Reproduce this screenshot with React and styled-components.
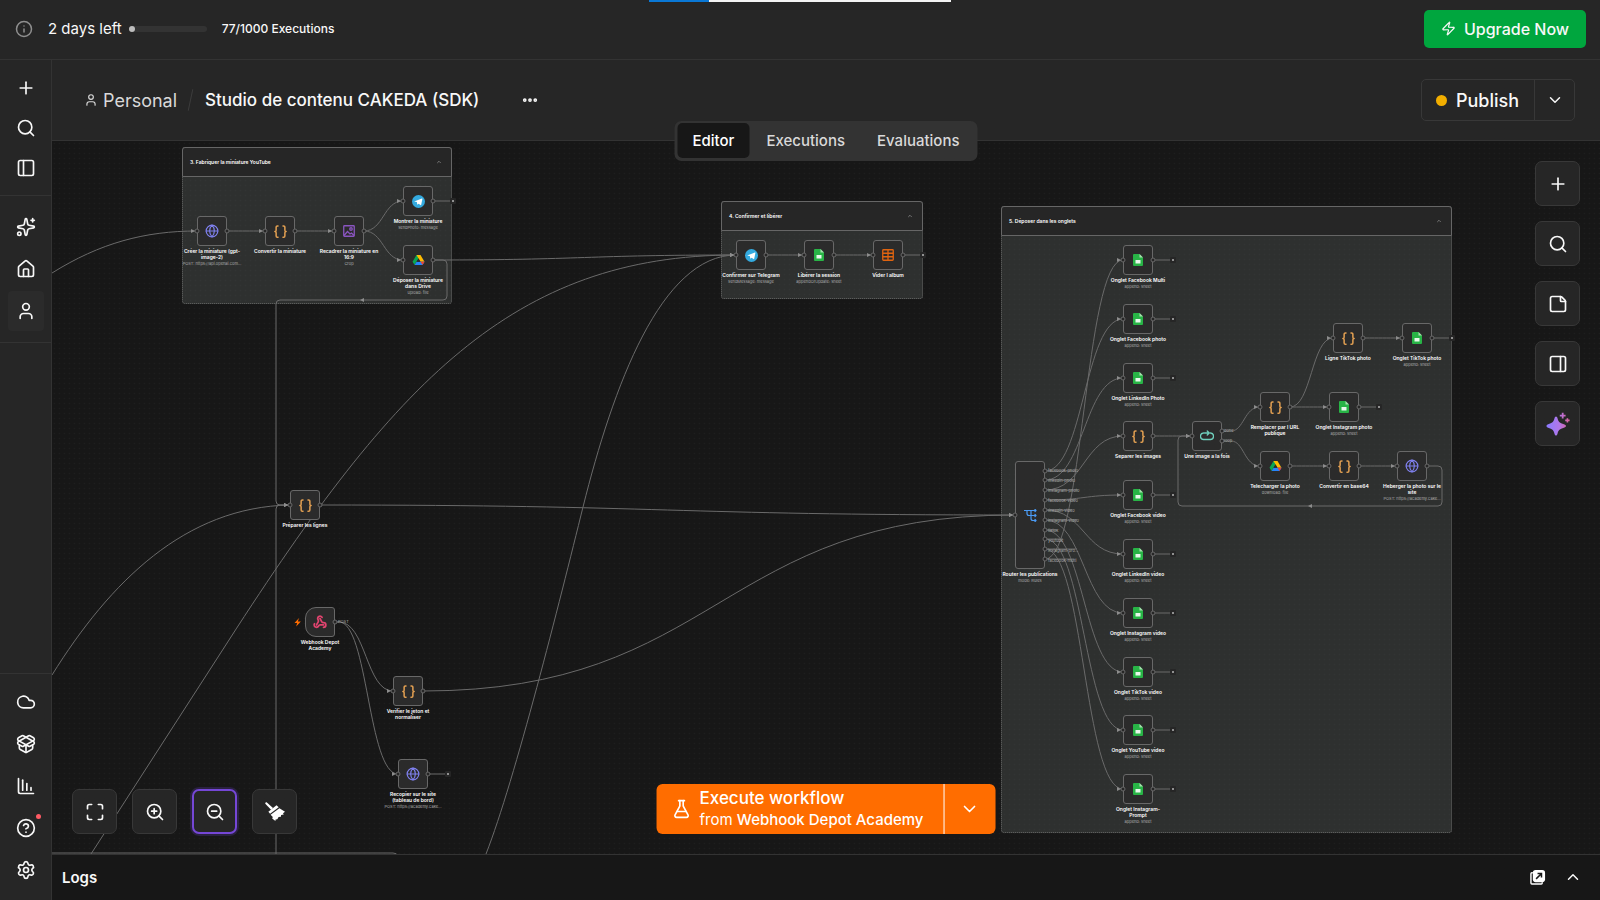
import React from 'react';
import styled, { createGlobalStyle, css } from 'styled-components';
import {
  Info, Zap, User, Plus, Search, PanelLeft, PanelRight, Sparkles, House, Cloud, PackageOpen,
  ChartColumnDecreasing, CircleQuestionMark, Settings, Maximize, ZoomIn, ZoomOut, StickyNote,
  FlaskConical, ChevronDown, ChevronUp, Ellipsis, Braces, Globe, Webhook,
} from 'lucide-react';

const c = {
  panel: '#262626',
  line: '#333333',
  canvas: '#171717',
  text: '#f8f8f8',
  soft: '#d9d9d9',
  muted: '#adadad',
  edge: '#6a6a6a',
  orange: '#ff6d00',
};

const GlobalStyle = createGlobalStyle`
  *, *::before, *::after { box-sizing: border-box; }
  body { margin: 0; background: ${c.canvas}; color: ${c.text}; font-family: Inter, "Liberation Sans", sans-serif; }
  button { font: inherit; color: inherit; background: none; border: 0; padding: 0; cursor: pointer; }
  a { color: inherit; text-decoration: none; }
  svg { display: block; flex: none; }
`;

/* ---------- Page frame ---------- */

const Page = styled.div`
  display: flex;
  flex-direction: column;
  height: 100vh;
  overflow: hidden;
`;

const LoadingBar = styled.div`
  position: absolute;
  top: 0;
  left: 50%;
  width: 302px;
  height: 2px;
  margin-left: -151px;
  background: linear-gradient(90deg, #0a78d6 60px, #f3f3f3 60px);
`;

const TopBar = styled.header`
  display: flex;
  align-items: center;
  height: 59px;
  flex: none;
  padding: 0 14px 2px 15px;
  background: ${c.panel};
`;

const TrialText = styled.span`
  margin: 0 7px 0 15px;
  font-size: 15px;
  line-height: 24px;
`;

const Meter = styled.div`
  width: 78px;
  height: 6px;
  border-radius: 3px;
  background: #333333;
`;

const MeterFill = styled.div`
  height: 6px;
  border-radius: 3px;
  background: #bdbdbd;
`;

const UsageText = styled.span`
  margin-left: 15px;
  font-size: 12px;
  font-weight: 500;
`;

const UpgradeButton = styled.button`
  display: flex;
  align-items: center;
  justify-content: center;
  gap: 8px;
  height: 38px;
  width: 162px;
  margin-left: auto;
  border-radius: 5px;
  background: #00a63e;
  font-size: 16px;
  font-weight: 500;
`;

const Body = styled.div`
  display: flex;
  flex: 1;
  min-height: 0;
  border-top: 1px solid ${c.line};
`;

/* ---------- Sidebar ---------- */

const Sidebar = styled.nav`
  display: flex;
  flex-direction: column;
  justify-content: space-between;
  width: 52px;
  flex: none;
  background: ${c.panel};
  border-right: 1px solid ${c.line};
`;

const SideGroup = styled.div`
  display: flex;
  flex-direction: column;
  align-items: center;
  gap: ${(p) => p.$gap}px;
  padding: ${(p) => p.$pad};
  border-style: solid;
  border-color: ${c.line};
  border-width: ${(p) => (p.$top ? '1px 0 0' : '0 0 1px')};
`;

const SideLink = styled.a`
  position: relative;
  display: flex;
  align-items: center;
  justify-content: center;
  width: 36px;
  height: 40px;
  border-radius: 4px;
  background: ${(p) => (p.$active ? '#2b2b2b' : 'transparent')};
`;

const AlertDot = styled.span`
  position: absolute;
  top: 6px;
  right: 3px;
  width: 5px;
  height: 5px;
  border-radius: 50%;
  background: #ff5a64;
`;

/* ---------- Workflow header ---------- */

const Main = styled.main`
  display: flex;
  flex-direction: column;
  flex: 1;
  min-width: 0;
`;

const WorkflowHeader = styled.div`
  position: relative;
  z-index: 2;
  display: flex;
  align-items: center;
  height: 81px;
  flex: none;
  padding: 0 25px 0 32px;
  background: ${c.panel};
  border-bottom: 1px solid ${c.line};
`;

const Crumb = styled.a`
  display: flex;
  align-items: center;
  gap: 5px;
  font-size: 18px;
  color: ${c.soft};
`;

const Slash = styled.span`
  width: 1px;
  height: 22px;
  margin: 0 14px 0 13px;
  background: #3d3d3d;
  transform: rotate(12deg);
`;

const Title = styled.h1`
  margin: 0;
  font-size: 17px;
  font-weight: 500;
`;

const MoreButton = styled.button`
  margin-left: 42px;
`;

const PublishGroup = styled.div`
  display: flex;
  height: 42px;
  margin-left: auto;
  border: 1px solid #383838;
  border-radius: 5px;
`;

const PublishButton = styled.button`
  display: flex;
  align-items: center;
  gap: 9px;
  padding: 0 15px 0 14px;
  font-size: 18px;
  font-weight: 500;
`;

const StatusDot = styled.span`
  width: 11px;
  height: 11px;
  border-radius: 50%;
  background: #f2ae00;
`;

const PublishMenu = styled.button`
  display: flex;
  align-items: center;
  justify-content: center;
  width: 40px;
  border-left: 1px solid #383838;
`;

const Tabs = styled.div`
  position: absolute;
  left: 50%;
  bottom: -21px;
  display: flex;
  gap: 2px;
  height: 40px;
  padding: 2px 3px 3px;
  transform: translateX(-50%);
  border-radius: 7px;
  background: #333333;
`;

const Tab = styled.button`
  padding: 0 15px;
  border-radius: 5px;
  font-size: 15px;
  font-weight: 500;
  color: ${(p) => (p.$active ? '#ffffff' : c.soft)};
  background: ${(p) => (p.$active ? c.canvas : 'transparent')};
`;

/* ---------- Canvas ---------- */

const Canvas = styled.section`
  position: relative;
  flex: 1;
  min-height: 0;
  overflow: hidden;
  background: radial-gradient(circle, #1e1e1e 20%, transparent 30%) 0 0 / 5px 5px ${c.canvas};
`;

/* Panned layer: everything inside is placed in workflow coordinates. */
const Viewport = styled.div`
  position: absolute;
  top: 0;
  left: 0;
  transform: translate(-52px, -141px);
`;

const Wires = styled.svg`
  position: absolute;
  top: 0;
  left: 0;
  width: 1600px;
  height: 860px;
`;

const GroupBox = styled.section`
  position: absolute;
  left: ${(p) => p.$x}px;
  top: ${(p) => p.$y}px;
  width: ${(p) => p.$w}px;
  height: ${(p) => p.$h}px;
  border: 1px dotted #666666;
  border-radius: 3px;
  background: radial-gradient(circle, #323434 20%, transparent 30%) 0 0 / 5px 5px #2e302f;
`;

const GroupHeader = styled.div`
  display: flex;
  align-items: center;
  justify-content: space-between;
  height: 30px;
  margin: -1px;
  padding: 0 9px 0 7px;
  border: 1px solid #666666;
  border-radius: 3px 3px 0 0;
  background: ${c.panel};
  color: #ffffff;
`;

const GroupTitle = styled.h2`
  margin: 0;
  font-size: 5px;
  font-weight: 600;
`;

const NodeWrap = styled.div`
  position: absolute;
  left: ${(p) => p.$x}px;
  top: ${(p) => p.$y}px;
  width: 60px;
  margin-left: -30px;
  display: flex;
  flex-direction: column;
  align-items: center;
  transform: translateY(-${(p) => p.$h / 2}px);
`;

const NodeBox = styled.div`
  display: flex;
  align-items: center;
  justify-content: center;
  width: 30px;
  height: ${(p) => p.$h}px;
  margin-bottom: 2px;
  border: 1px solid #686868;
  border-radius: ${(p) => (p.$trigger ? '11px 3px 3px 11px' : '3px')};
  background: #2b2b2b;
`;

const NodeLabel = styled.div`
  width: ${(p) => p.$w || 60}px;
  font-size: 5px;
  line-height: 6px;
  font-weight: 600;
  text-align: center;
  color: #ffffff;
`;

const NodeSub = styled.div`
  font-size: 4px;
  line-height: 7px;
  color: ${c.muted};
  white-space: nowrap;
`;

const PortLabels = styled.div`
  position: absolute;
  left: ${(p) => p.$x}px;
  top: ${(p) => p.$y}px;
  display: grid;
  grid-auto-rows: 10px;
  align-items: center;
  justify-items: start;
  font-size: 4px;
  line-height: 4px;
  color: ${c.muted};
  white-space: nowrap;
`;

/* ---------- Floating controls ---------- */

const controlPosition = {
  right: css`top: 20px; right: 20px; flex-direction: column;`,
  bottom: css`left: 20px; bottom: 20px;`,
};

const Controls = styled.div`
  position: absolute;
  display: flex;
  gap: 15px;
  ${(p) => controlPosition[p.$at]}
`;

const ControlButton = styled.button`
  display: flex;
  align-items: center;
  justify-content: center;
  width: 45px;
  height: 45px;
  border: ${(p) => (p.$focus ? '2px solid #7547d6' : '1px solid #383838')};
  border-radius: 7px;
  background: ${c.panel};
  box-shadow: ${(p) => (p.$focus ? '0 0 0 2px #2a2140' : 'none')};
`;

const RunGroup = styled.div`
  position: absolute;
  left: 50%;
  bottom: 20px;
  display: flex;
  height: 50px;
  transform: translateX(-50%);
  border-radius: 6px;
  overflow: hidden;
  background: ${c.orange};
  color: #ffffff;
`;

const RunButton = styled.button`
  display: flex;
  align-items: center;
  gap: 8px;
  padding: 0 20px 0 15px;
  text-align: left;
`;

const RunTitle = styled.span`
  display: block;
  font-size: 17px;
  line-height: 21px;
  font-weight: 500;
`;

const RunSource = styled.span`
  display: block;
  font-size: 15px;
  line-height: 21px;

  strong { font-weight: 500; }
`;

const RunMenu = styled.button`
  display: flex;
  align-items: center;
  justify-content: center;
  width: 52px;
  border-left: 1px solid #ffffff;
`;

const LogsBar = styled.footer`
  display: flex;
  align-items: center;
  height: 46px;
  flex: none;
  padding: 0 18px 1px 10px;
  border-top: 1px solid ${c.line};
  background: ${c.canvas};
`;

const LogsTitle = styled.h2`
  flex: 1;
  margin: 0;
  font-size: 15px;
  font-weight: 600;
`;

const LogsActions = styled.div`
  display: flex;
  align-items: center;
  gap: 18px;
`;

/* ---------- Drawn icons ---------- */

const Telegram = () => (
  <svg width="13" height="13" viewBox="0 0 24 24">
    <circle cx="12" cy="12" r="12" fill="#34aadf" />
    <path d="M4 11.800 18.200 6.300c.7-.2 1.200.2 1 1.100l-2.200 10.600c-.2.8-.7 1-1.300.6l-3.500-2.600-1.700 1.700c-.4.3-.8.2-.8-.4l-.8-4.300Z" fill="#fff" />
  </svg>
);

const Drive = () => (
  <svg width="13" height="12" viewBox="0 0 24 24">
    <path d="M8 2h8L8.200 15.200 4.300 22 0 15.500Z" fill="#0aa653" />
    <path d="M8 2h8l8 13.500h-8Z" fill="#ffba00" />
    <path d="M8.200 15.500H24L20 22H4.200Z" fill="#2684fc" />
    <path d="M16 15.500h8L20 22Z" fill="#ea4335" />
    <path d="M12 9.200 15.700 15.500H8.300Z" fill="#2b2b2b" />
  </svg>
);

const Sheets = () => (
  <svg width="10" height="12" viewBox="0 0 20 24">
    <path d="M2 0h11l7 7v15a2 2 0 0 1-2 2H2a2 2 0 0 1-2-2V2a2 2 0 0 1 2-2Z" fill="#28b446" />
    <path d="M13 0l7 7h-7Z" fill="#a9dfb0" />
    <path d="M5 12h10v7H5Z" fill="#e9f8ec" />
  </svg>
);

const TableIcon = () => (
  <svg width="12" height="12" viewBox="0 0 24 24" fill="none" stroke="#e06410" strokeWidth="2.600">
    <rect x="1.500" y="1.500" width="21" height="21" rx="1.500" />
    <path d="M1.500 8.500h21M1.500 15.500h21M12 1.500v21" />
  </svg>
);

const ImageIcon = () => (
  <svg width="12" height="12" viewBox="0 0 24 24" fill="none" stroke="#8a55c0" strokeWidth="2.600">
    <rect x="1.500" y="1.500" width="21" height="21" rx="1.500" />
    <circle cx="16" cy="8" r="2.500" />
    <path d="M2 21l7-8 5 5 3-2 5 5" />
  </svg>
);

const LoopIcon = () => (
  <svg width="14" height="12" viewBox="0 0 28 24" fill="none" stroke="#6fd0bd" strokeWidth="2.600" strokeLinecap="round" strokeLinejoin="round">
    <path d="M7 6a6.500 6.500 0 0 0 1 13h12a6.500 6.500 0 0 0 1-13M9 6h9M14.500 2l4 4-4 4" />
  </svg>
);

const RouteIcon = () => (
  <svg width="13" height="13" viewBox="0 0 26 26" fill="none" stroke="#4a9bf5" strokeWidth="2.400" strokeLinecap="round" strokeLinejoin="round">
    <path d="M1 3h23M6 3v6q0 4 4 4h14M14 3v16q0 4 4 4h6M22 1l2 2-2 2M22 11l2 2-2 2M22 21l2 2-2 2" />
  </svg>
);

const Bolt = () => <path d="M299 618l-4.500 5h2.600l-.9 3.500 4.600-5h-2.900Z" fill="#ff6d00" />;

const Broom = () => (
  <svg width="22" height="22" viewBox="0 0 22 22" fill="#ffffff">
    <path d="M2.600 1.200 9 7.100 7.300 9 1.300 2.700Q.8 1 2.600 1.200Z" />
    <path d="M12.500 4.200l2.200 2-8.600 6.500-1.700-2Z" />
    <path d="M15.400 7.200l5.600 3.500-2 1.500.8 1.200-2.700.7-.2 1.700-2.300.3-1.300 2.200-1.700.2-.2 1.500-3.200-2.600.6-1.400-2.200-2.200Z" />
  </svg>
);

const AiSpark = () => (
  <svg width="24" height="24" viewBox="0 0 24 24">
    <defs>
      <linearGradient id="spark" x1="0" y1="0" x2="1" y2="0">
        <stop offset="0" stopColor="#8b7bff" />
        <stop offset=".55" stopColor="#b177e8" />
        <stop offset="1" stopColor="#e0609a" />
      </linearGradient>
    </defs>
    <path
      d="M10 4.500c.7 0 1.200.8 1.500 1.800 1 3.600 1.700 4.400 5.700 5.700 2 .6 2.800 1.100 2.800 2s-.8 1.400-2.800 2c-4 1.300-4.700 2.100-5.700 5.700-.3 1-.8 1.800-1.500 1.800s-1.200-.8-1.500-1.800C7.500 18.100 6.800 17.300 2.800 16 .8 15.400.500 14.900.500 14s.3-1.400 2.300-2c4-1.300 4.700-2.100 5.700-5.700.3-1 .8-1.800 1.500-1.800ZM15.800.8h1.800v2h2v1.800h-2v2h-1.800v-2h-2V2.800h2ZM20.600 6.200h1.600v1.400h1.400v1.600h-1.400v1.400h-1.600V9.200h-1.400V7.600h1.400Z"
      fill="url(#spark)"
    />
  </svg>
);

const PopOut = () => (
  <svg width="16" height="16" viewBox="0 0 17 17" fill="none">
    <path d="M3 4H2a1 1 0 0 0-1 1v10a1 1 0 0 0 1 1h10a1 1 0 0 0 1-1v-1" stroke="#fff" strokeWidth="1.500" />
    <rect x="3" y="1" width="13" height="13" rx="3" fill="#fff" />
    <path d="M6.500 10.500l5-5M8 4.800h4.200V9" stroke="#171717" strokeWidth="1.600" />
  </svg>
);

const nodeIcons = {
  globe: <Globe size={14} strokeWidth={2} color="#7f80ee" />,
  code: <Braces size={15} strokeWidth={2.4} color="#e3a052" />,
  image: <ImageIcon />,
  telegram: <Telegram />,
  drive: <Drive />,
  sheets: <Sheets />,
  table: <TableIcon />,
  loop: <LoopIcon />,
  route: <RouteIcon />,
  webhook: <Webhook size={14} strokeWidth={3} color="#e0446f" />,
};

/* ---------- Workflow data ---------- */

const groups = [
  { x: 182, y: 147, w: 270, h: 157, title: '3. Fabriquer la miniature YouTube' },
  { x: 721, y: 201, w: 202, h: 98, title: '4. Confirmer et libérer' },
  { x: 1001, y: 206, w: 451, h: 627, title: '5. Déposer dans les onglets' },
];

const sheet = (x, y, label, w) => ({ x, y, icon: 'sheets', label, sub: 'append: sheet', out: x + 35, w });

const nodes = [
  { x: 212, y: 231, icon: 'globe', label: 'Créer la miniature (gpt-image-2)', sub: 'POST: https://api.openai.com...' },
  { x: 280, y: 231, icon: 'code', label: 'Convertir la miniature' },
  { x: 349, y: 231, icon: 'image', label: 'Recadrer la miniature en 16:9', sub: 'Crop' },
  { x: 418, y: 201, icon: 'telegram', label: 'Montrer la miniature', sub: 'sendPhoto: message', out: 453 },
  { x: 418, y: 260, icon: 'drive', label: 'Déposer la miniature dans Drive', sub: 'upload: file', w: 50 },
  { x: 751, y: 255, icon: 'telegram', label: 'Confirmer sur Telegram', sub: 'sendMessage: message' },
  { x: 819, y: 255, icon: 'sheets', label: 'Libérer la session', sub: 'appendOrUpdate: sheet' },
  { x: 888, y: 255, icon: 'table', label: 'Vider l album', out: 923 },
  sheet(1138, 260, 'Onglet Facebook Multi'),
  sheet(1138, 319, 'Onglet Facebook photo'),
  sheet(1138, 378, 'Onglet LinkedIn Photo'),
  { x: 1138, y: 436, icon: 'code', label: 'Separer les images' },
  sheet(1138, 495, 'Onglet Facebook video'),
  sheet(1138, 554, 'Onglet LinkedIn video'),
  sheet(1138, 613, 'Onglet Instagram video'),
  sheet(1138, 672, 'Onglet TikTok video'),
  sheet(1138, 730, 'Onglet YouTube video'),
  sheet(1138, 789, 'Onglet Instagram-Prompt', 50),
  { x: 1207, y: 436, icon: 'loop', label: 'Une image a la fois', noPort: true },
  { x: 1275, y: 407, icon: 'code', label: 'Remplacer par l URL publique', w: 50 },
  sheet(1344, 407, 'Onglet Instagram photo'),
  { x: 1348, y: 338, icon: 'code', label: 'Ligne TikTok photo' },
  sheet(1417, 338, 'Onglet TikTok photo'),
  { x: 1275, y: 466, icon: 'drive', label: 'Telecharger la photo', sub: 'download: file' },
  { x: 1344, y: 466, icon: 'code', label: 'Convertir en base64' },
  { x: 1412, y: 466, icon: 'globe', label: 'Heberger la photo sur le site', sub: 'POST: https://academy.cake...' },
  { x: 1030, y: 515, icon: 'route', label: 'Router les publications', sub: 'mode: Rules', h: 108, noPort: true },
  { x: 305, y: 505, icon: 'code', label: 'Préparer les lignes' },
  { x: 320, y: 622, icon: 'webhook', label: 'Webhook Depot Academy', trigger: true, w: 46 },
  { x: 408, y: 691, icon: 'code', label: 'Verifier le jeton et normaliser', w: 50 },
  { x: 413, y: 774, icon: 'globe', label: 'Recopier sur le site (tableau de bord)', sub: 'POST: https://academy.cake...', w: 50, out: 448 },
];

/* Router outputs: label, port height, target height, end of the label. */
const routes = [
  ['facebook-photo', 471, 319, 1076],
  ['linkedin-photo', 480, 378, 1073],
  ['instagram-photo', 490, 436, 1078],
  ['facebook-video', 500, 495, 1076],
  ['linkedin-video', 510, 554, 1072],
  ['instagram-video', 520, 613, 1077],
  ['tiktok', 530, 672, 1057],
  ['youtube', 539, 730, 1063],
  ['instagram-pro...', 549, 789, 1077],
  ['facebook-multi', 559, 260, 1074],
];

const curve = (x1, y1, x2, y2) => {
  const m = (x1 + x2) / 2;
  return `M${x1} ${y1}C${m} ${y1} ${m} ${y2} ${x2} ${y2}`;
};

const link = (x1, y1, x2, y2) => ({ d: curve(x1, y1, x2, y2), end: [x2, y2] });

const links = [
  { d: 'M52 273C100 243 145 231 197 231', end: [197, 231] },
  link(227, 231, 265, 231),
  link(295, 231, 334, 231),
  link(364, 231, 403, 201),
  link(364, 231, 403, 260),
  link(433, 260, 736, 255),
  { d: 'M91 854L229 640C394 384 512 255 736 255', end: [736, 255] },
  { d: 'M486 854C515 780 560 600 583 507C613 387 661 255 736 255', end: [736, 255] },
  link(766, 255, 804, 255),
  link(834, 255, 873, 255),
  { d: 'M52 675C110 582 185 507 290 505', end: [290, 505] },
  { d: 'M433 260H443Q447 260 447 264V296Q447 300 443 300H280Q276 300 276 304V501Q276 505 280 505H290', end: [290, 505] },
  { d: 'M276 854V509Q276 505 280 505H290', end: [290, 505] },
  link(320, 505, 1015, 515),
  link(423, 691, 1015, 515),
  { d: 'M335 622H339C366 622 366 691 393 691', end: [393, 691] },
  { d: 'M335 622H339C368 622 368 774 398 774', end: [398, 774] },
  ...routes.map(([, from, to]) => link(1045, from, 1123, to)),
  link(1153, 436, 1192, 436),
  { d: 'M1222 431H1231C1244 431 1244 407 1260 407', end: [1260, 407] },
  { d: 'M1222 441H1231C1244 441 1244 466 1260 466', end: [1260, 466] },
  link(1290, 407, 1329, 407),
  link(1290, 407, 1333, 338),
  link(1363, 338, 1402, 338),
  link(1290, 466, 1329, 466),
  link(1359, 466, 1397, 466),
  { d: 'M1427 466H1438Q1442 466 1442 470V502Q1442 506 1438 506H1182Q1178 506 1178 502V440Q1178 436 1182 436H1192', end: [1192, 436] },
];

const Edges = () => (
  <Wires viewBox="0 0 1600 860" fill="none" stroke={c.edge} strokeWidth="1">
    {links.map(({ d }) => <path key={d} d={d} />)}
    {routes.map(([name, y, , end]) => <path key={name} d={`M1045 ${y}H${end}`} />)}
    <path d="M52 853H393Q397 853 398 856" />
    {nodes.filter((n) => n.out).map((n) => (
      <path key={n.label} d={`M${n.x + 15} ${n.y}H${n.out - 3}`} />
    ))}
    <g fill="#8c8c8c" stroke="none">
      {links.map(({ d, end: [x, y] }) => (
        <path key={d} d={`M${x - 6} ${y - 2}l4 2-4 2Z`} />
      ))}
      <path d="M360 300l4-2v4ZM1308 506l4-2v4Z" />
    </g>
  </Wires>
);

const Ports = () => (
  <Wires viewBox="0 0 1600 860" fill={c.panel} stroke="#686868" strokeWidth="1">
    {nodes.map((n) => (
      <g key={n.label}>
        {!n.trigger && <circle cx={n.x - 15} cy={n.y} r="2" />}
        {!n.noPort && <circle cx={n.x + 15} cy={n.y} r="2" />}
        {n.out && <rect x={n.out - 3} y={n.y - 3} width="6" height="6" rx="1" stroke="none" />}
        {n.out && <circle cx={n.out} cy={n.y} r="1" fill="#b5b5b5" stroke="none" />}
      </g>
    ))}
    {routes.map(([name, y]) => <circle key={name} cx="1045" cy={y} r="2" />)}
    <circle cx="1222" cy="431" r="2" />
    <circle cx="1222" cy="441" r="2" />
    <g stroke="none"><Bolt /></g>
  </Wires>
);

const WorkflowNode = ({ x, y, h = 30, icon, label, sub, w, trigger }) => (
  <NodeWrap $x={x} $y={y} $h={h}>
    <NodeBox $h={h} $trigger={trigger}>{nodeIcons[icon]}</NodeBox>
    <NodeLabel $w={w}>{label}</NodeLabel>
    {sub && <NodeSub>{sub}</NodeSub>}
  </NodeWrap>
);

const mainLinks = [[Plus, 'New'], [Search, 'Search'], [PanelLeft, 'Toggle sidebar']];
const placeLinks = [[Sparkles, 'Assistant'], [House, 'Home'], [User, 'Personal']];
const footLinks = [
  [Cloud, 'Admin'], [PackageOpen, 'Templates'], [ChartColumnDecreasing, 'Insights'],
  [CircleQuestionMark, 'Help'], [Settings, 'Settings'],
];

const SideLinks = ({ items, active }) =>
  items.map(([Icon, name]) => (
    <SideLink key={name} href="#" aria-label={name} $active={name === active}>
      <Icon size={20} strokeWidth={2} />
      {name === 'Help' && <AlertDot />}
    </SideLink>
  ));

export default function App() {
  return (
    <Page>
      <GlobalStyle />
      <LoadingBar />
      <TopBar>
        <Info size={18} color="#8f8f8f" />
        <TrialText>2 days left</TrialText>
        <Meter><MeterFill style={{ width: `${(77 / 1000) * 100}%` }} /></Meter>
        <UsageText>77/1000 Executions</UsageText>
        <UpgradeButton><Zap size={15} />Upgrade Now</UpgradeButton>
      </TopBar>
      <Body>
        <Sidebar>
          <div>
            <SideGroup $gap={0} $pad="8px 0 7px"><SideLinks items={mainLinks} /></SideGroup>
            <SideGroup $gap={2} $pad="11px 0"><SideLinks items={placeLinks} active="Personal" /></SideGroup>
          </div>
          <SideGroup $top $gap={2} $pad="8px 0 10px"><SideLinks items={footLinks} /></SideGroup>
        </Sidebar>
        <Main>
          <WorkflowHeader>
            <Crumb href="#"><User size={14} />Personal</Crumb>
            <Slash />
            <Title>Studio de contenu CAKEDA (SDK)</Title>
            <MoreButton aria-label="More"><Ellipsis size={18} strokeWidth={3} /></MoreButton>
            <PublishGroup>
              <PublishButton><StatusDot />Publish</PublishButton>
              <PublishMenu aria-label="Publish options"><ChevronDown size={18} /></PublishMenu>
            </PublishGroup>
            <Tabs>
              <Tab $active>Editor</Tab>
              <Tab>Executions</Tab>
              <Tab>Evaluations</Tab>
            </Tabs>
          </WorkflowHeader>
          <Canvas>
            <Viewport>
              {groups.map((g) => (
                <GroupBox key={g.title} $x={g.x} $y={g.y} $w={g.w} $h={g.h}>
                  <GroupHeader><GroupTitle>{g.title}</GroupTitle><ChevronUp size={6} color="#bdbdbd" /></GroupHeader>
                </GroupBox>
              ))}
              <Edges />
              {nodes.map((n) => <WorkflowNode key={n.label} {...n} />)}
              <Ports />
              <PortLabels $x={1048} $y={466}>{routes.map(([name]) => <span key={name}>{name}</span>)}</PortLabels>
              <PortLabels $x={1224} $y={426}><span>done</span><span>loop</span></PortLabels>
              <PortLabels $x={338} $y={617}><span>POST</span></PortLabels>
            </Viewport>
            <Controls $at="right">
              <ControlButton aria-label="Add node"><Plus size={20} /></ControlButton>
              <ControlButton aria-label="Search"><Search size={20} /></ControlButton>
              <ControlButton aria-label="Add note"><StickyNote size={20} /></ControlButton>
              <ControlButton aria-label="Toggle panel"><PanelRight size={20} /></ControlButton>
              <ControlButton aria-label="Assistant"><AiSpark /></ControlButton>
            </Controls>
            <Controls $at="bottom">
              <ControlButton aria-label="Fit view"><Maximize size={20} /></ControlButton>
              <ControlButton aria-label="Zoom in"><ZoomIn size={20} /></ControlButton>
              <ControlButton aria-label="Zoom out" $focus><ZoomOut size={20} /></ControlButton>
              <ControlButton aria-label="Tidy up"><Broom /></ControlButton>
            </Controls>
            <RunGroup>
              <RunButton>
                <FlaskConical size={20} />
                <span>
                  <RunTitle>Execute workflow</RunTitle>
                  <RunSource>from <strong>Webhook Depot Academy</strong></RunSource>
                </span>
              </RunButton>
              <RunMenu aria-label="Choose trigger"><ChevronDown size={20} /></RunMenu>
            </RunGroup>
          </Canvas>
          <LogsBar>
            <LogsTitle>Logs</LogsTitle>
            <LogsActions>
              <button aria-label="Pop out"><PopOut /></button>
              <button aria-label="Open logs"><ChevronUp size={18} /></button>
            </LogsActions>
          </LogsBar>
        </Main>
      </Body>
    </Page>
  );
}
